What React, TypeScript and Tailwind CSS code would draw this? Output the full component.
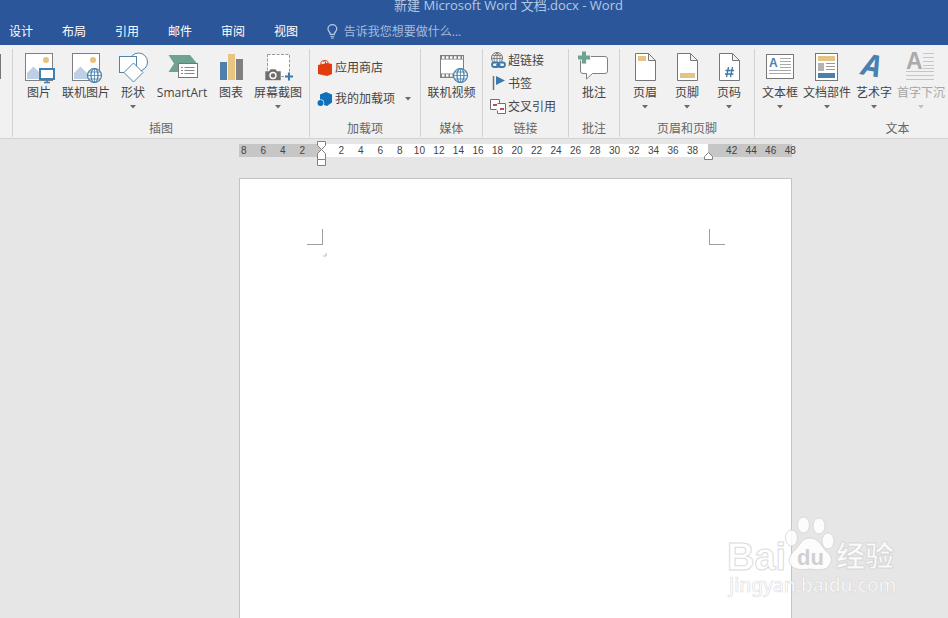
import React from "react";

const tabs = ["设计", "布局", "引用", "邮件", "审阅", "视图"];

// even numbers of the ruler, 0 and 40 sit under the indent markers
const rulerMarks = [
  8, 6, 4, 2, 0, 2, 4, 6, 8, 10, 12, 14, 16, 18, 20, 22, 24, 26, 28, 30, 32,
  34, 36, 38, 40, 42, 44, 46, 48,
];

const Globe = ({ cx, cy, r }: { cx: number; cy: number; r: number }) => (
  <g stroke="#4a80a8" strokeWidth="1.2" fill="none">
    <circle cx={cx} cy={cy} r={r} fill="#f4f8fb" />
    <ellipse cx={cx} cy={cy} rx={r / 2} ry={r} />
    <path
      d={`M${cx - r} ${cy}h${2 * r}M${cx} ${cy - r}v${2 * r}M${cx - r + 1} ${
        cy - 3.5
      }h${2 * r - 2}M${cx - r + 1} ${cy + 3.5}h${2 * r - 2}`}
      strokeWidth=".8"
    />
  </g>
);

const Photo = () => (
  <g>
    <rect x="4.5" y="1.5" width="27" height="27" fill="#fff" stroke="#808080" />
    <circle cx="25" cy="8" r="3" fill="#e8c27a" />
    <path d="M6 27v-6l6.500-6.500L20 22v5z" fill="#bdd0e6" />
  </g>
);

const Sheet = () => (
  <path
    d="M8.500 1.500h13l7 7v20h-20zM21.500 1.500v7h7"
    fill="#fff"
    stroke="#777"
  />
);

const icons: Record<string, React.ReactNode> = {
  picture: (
    <>
      <Photo />
      <rect x="19" y="17" width="14" height="10" fill="#fff" stroke="#3f80b0" strokeWidth="2" />
      <path d="M26 28v2M23 30.500h6" stroke="#3f80b0" strokeWidth="1.500" />
    </>
  ),
  onlinePicture: (
    <>
      <Photo />
      <Globe cx={26.5} cy={23.5} r={7} />
    </>
  ),
  shapes: (
    <g fill="#fff" stroke="#4f86ad">
      <circle cx="23.500" cy="10" r="9" />
      <rect x="4.500" y="4.500" width="17" height="16" />
      <path d="M18.500 11l9.500 9.500-9.500 9.500L9 20.500z" />
    </g>
  ),
  smartart: (
    <>
      <path d="M4.500 3H26l7 8.500L26 20H4.500L10 11.500z" fill="#6fa290" />
      <rect x="14.500" y="11.500" width="19" height="14" fill="#fff" stroke="#777" />
      <path
        d="M17 15.500h2M17 18.500h2M17 21.500h2M20.500 15.500h10M20.500 18.500h10M20.500 21.500h10"
        stroke="#888"
      />
    </>
  ),
  chart: (
    <>
      <rect x="7" y="10" width="7" height="18" fill="#4e7fae" />
      <rect x="15" y="2" width="7" height="26" fill="#e8c681" />
      <rect x="23" y="7" width="7" height="21" fill="#808080" />
    </>
  ),
  screenshot: (
    <>
      <rect x="7.500" y="2.500" width="22" height="22" fill="#fff" stroke="#999" strokeDasharray="3 1.500" />
      <path d="M5 19h4l1.500-2h5l1.500 2h4v9.500H5z" fill="#6e6e6e" stroke="#f1f1f1" strokeWidth=".6" />
      <circle cx="13" cy="23.500" r="3" fill="#6e6e6e" stroke="#fff" strokeWidth="1.400" />
      <path d="M29 20v9M24.500 24.500h9" stroke="#f1f1f1" strokeWidth="5" />
      <path d="M29 20.500v8M25 24.500h8" stroke="#3f78ab" strokeWidth="2" />
    </>
  ),
  video: (
    <>
      <rect x="6.500" y="3.500" width="23" height="22" fill="#fff" stroke="#808080" />
      <path d="M6 5.500h24M6 23.500h24" stroke="#808080" strokeWidth="4" />
      <path d="M8 5.500h21M8 23.500h21" stroke="#fff" strokeWidth="2.400" strokeDasharray="2.500 1.500" />
      <Globe cx={26.5} cy={23.5} r={7} />
    </>
  ),
  comment: (
    <>
      <path
        d="M7 4.500h22a2.500 2.500 0 0 1 2.500 2.500v12a2.500 2.500 0 0 1-2.500 2.500H16.500l-6 5.500v-5.500H7A2.500 2.500 0 0 1 4.500 19V7A2.500 2.500 0 0 1 7 4.500z"
        fill="#fff"
        stroke="#808080"
      />
      <path d="M8 -1v13M1 5.500h14" stroke="#f1f1f1" strokeWidth="6" />
      <path d="M8 -.5v12M2 5.500h12" stroke="#6da491" strokeWidth="4" />
    </>
  ),
  header: (
    <>
      <Sheet />
      <rect x="11" y="4" width="8" height="5" fill="#e5c384" />
    </>
  ),
  footer: (
    <>
      <Sheet />
      <rect x="11" y="21" width="15" height="5" fill="#e5c384" />
    </>
  ),
  pageNumber: (
    <>
      <Sheet />
      <path
        d="M17.500 15l-2 10M21.500 15l-2 10M14.500 18.500h8.500M14 22h8.500"
        stroke="#3f78a4"
        strokeWidth="1.300"
      />
    </>
  ),
  textBox: (
    <>
      <rect x="4.500" y="2.500" width="27" height="24" fill="#fff" stroke="#777" />
      <text x="7" y="15" fontSize="12" fontWeight="700" fill="#4a7fae">
        A
      </text>
      <path
        d="M18 6.500h11M18 9.500h11M18 12.500h11M18 15.500h11M7 18.500h22M7 21.500h22"
        stroke="#aaa"
      />
    </>
  ),
  parts: (
    <>
      <rect x="6.500" y="1.500" width="22" height="27" fill="#fff" stroke="#777" />
      <rect x="9" y="4" width="17" height="5" fill="#e5c384" />
      <rect x="9" y="11" width="6" height="8" fill="#b3b3b3" />
      <path d="M17 11.500h9M17 14.500h9M17 17.500h9" stroke="#999" />
      <rect x="9" y="21" width="17" height="5" fill="#4a7fae" />
    </>
  ),
  wordArt: (
    <text
      x="6"
      y="24"
      fontSize="30"
      fontFamily="Open Sans"
      fontWeight="700"
      fontStyle="italic"
      fill="#4a80b0"
      transform="rotate(10 16 16)"
    >
      A
    </text>
  ),
  dropCap: (
    <>
      <text x="3" y="17" fontSize="23" fontWeight="700" fill="#ababab">
        A
      </text>
      <path
        d="M20 1.500h11M20 5.500h11M20 9.500h11M20 13.500h11M20 16.500h11M3 19.500h28M3 23.500h28M3 27.500h28"
        stroke="#c6c6c6"
      />
    </>
  ),
};

const Arrow = ({ className = "text-[#6a6a6a]" }: { className?: string }) => (
  <svg width="6" height="4" viewBox="0 0 6 4" className={className}>
    <path d="M0 0h6L3 3.500z" fill="currentColor" />
  </svg>
);

type BigProps = {
  icon: string;
  label: string;
  width: string;
  menu?: boolean;
  disabled?: boolean;
};

const BigButton = ({ icon, label, width, menu, disabled }: BigProps) => (
  <button
    disabled={disabled}
    className={`flex shrink-0 flex-col items-center whitespace-nowrap ${width} ${
      disabled ? "text-[#a6a6a6]" : "text-[#444]"
    }`}
  >
    <svg width="36" height="33" viewBox="0 0 36 33" fill="none" className="overflow-visible font-['Liberation_Sans',sans-serif]">
      {icons[icon]}
    </svg>
    <span className="leading-4">{label}</span>
    {menu && (
      <span className="flex pt-1">
        <Arrow className={disabled ? "text-[#c0c0c0]" : "text-[#6a6a6a]"} />
      </span>
    )}
  </button>
);

const SmallButton = ({
  icon,
  label,
  menu,
}: {
  icon: React.ReactNode;
  label: string;
  menu?: boolean;
}) => (
  <button className="flex items-center gap-0.5 whitespace-nowrap leading-4">
    <svg width="16" height="18" viewBox="0 0 16 18" fill="none">
      {icon}
    </svg>
    {label}
    {menu && (
      <span className="pl-2">
        <Arrow />
      </span>
    )}
  </button>
);

const Group = ({
  title,
  width,
  children,
}: {
  title: string;
  width: string;
  children: React.ReactNode;
}) => (
  <section
    className={`flex shrink-0 flex-col justify-between border-r border-[#d2d2d2] ${width}`}
  >
    <div className="flex justify-center pt-[3px]">{children}</div>
    <h2 className="text-center leading-4 text-[#666]">{title}</h2>
  </section>
);

const Ribbon = () => (
  <div className="flex h-[94px] overflow-hidden border-b border-[#d2d2d2] bg-[#f1f1f1] pt-1 pb-px">
    <div className="w-[13px] shrink-0 border-r border-[#d2d2d2] pt-[5px]">
      <div className="h-[25px] w-px bg-[#777]" />
    </div>
    <Group title="插图" width="w-[297px]">
      <div className="flex pl-1.5">
        <BigButton icon="picture" label="图片" width="w-9" />
        <BigButton icon="onlinePicture" label="联机图片" width="w-[58px]" />
        <BigButton icon="shapes" label="形状" width="w-9" menu />
        <BigButton icon="smartart" label="SmartArt" width="w-[62px]" />
        <BigButton icon="chart" label="图表" width="w-9" />
        <BigButton icon="screenshot" label="屏幕截图" width="w-[58px]" menu />
      </div>
    </Group>
    <Group title="加载项" width="w-[111px]">
      <div className="flex w-full flex-col items-start gap-[13px] pt-[7px] pl-[7px] text-[#444]">
        <SmallButton
          label="应用商店"
          icon={
            <>
              <path d="M1 6l9-2 5 1v10l-5 2-9-2z" fill="#e03c0c" />
              <path d="M4 6V3.500c0-2 4-2.500 4.500-.5v2M6.500 3c0-2 4-2 4.500 0v2" stroke="#e03c0c" />
            </>
          }
        />
        <SmallButton
          label="我的加载项"
          menu
          icon={
            <>
              <path d="M9 2l6 2.500v8L10 16l-3-1c1-4-1-6-4-5.500V4.500z" fill="#0f6fb8" />
              <circle cx="3.500" cy="13" r="3" fill="#0f6fb8" />
            </>
          }
        />
      </div>
    </Group>
    <Group title="媒体" width="w-[62px]">
      <BigButton icon="video" label="联机视频" width="w-[58px]" />
    </Group>
    <Group title="链接" width="w-[86px]">
      <div className="flex w-full flex-col items-start gap-[5px] pl-[7px] text-[#444]">
        <SmallButton
          label="超链接"
          icon={
            <>
              <circle cx="7" cy="6" r="5.500" stroke="#707070" />
              <path d="M7 1v10M1.500 6.500h11M2.500 3.500h9M7 1c-4 3-3 7-2 9M7 1c4 3 3 6 2.500 8" stroke="#707070" strokeWidth=".8" />
              <rect x="2" y="10.500" width="7" height="4.500" rx="2.200" fill="#f1f1f1" stroke="#3f78ab" strokeWidth="1.800" />
              <rect x="8" y="10.500" width="7" height="4.500" rx="2.200" stroke="#3f78ab" strokeWidth="1.800" />
              <path d="M6 13h4.500" stroke="#3f78ab" strokeWidth="1.500" />
            </>
          }
        />
        <SmallButton
          label="书签"
          icon={
            <>
              <path d="M3.500 1v14" stroke="#707070" strokeWidth="1.500" />
              <path d="M6 1l9 4.500L6 10z" fill="#3f78ab" />
            </>
          }
        />
        <SmallButton
          label="交叉引用"
          icon={
            <>
              <path d="M6.500 11.500h-6v-10h9v4M7.500 5.500h8v10h-8v-3" fill="#fff" stroke="#707070" />
              <path d="M3 7h4M10 11h4" stroke="#c0504d" strokeWidth="2" />
            </>
          }
        />
      </div>
    </Group>
    <Group title="批注" width="w-[51px]">
      <BigButton icon="comment" label="批注" width="w-9" />
    </Group>
    <Group title="页眉和页脚" width="w-[135px]">
      <BigButton icon="header" label="页眉" width="w-[42px]" menu />
      <BigButton icon="footer" label="页脚" width="w-[42px]" menu />
      <BigButton icon="pageNumber" label="页码" width="w-[42px]" menu />
    </Group>
    <Group title="文本" width="w-[286px]">
      <div className="flex w-full pl-0.5">
        <BigButton icon="textBox" label="文本框" width="w-[46px]" menu />
        <BigButton icon="parts" label="文档部件" width="w-12" menu />
        <BigButton icon="wordArt" label="艺术字" width="w-[46px]" menu />
        <BigButton icon="dropCap" label="首字下沉" width="w-12" menu disabled />
      </div>
    </Group>
  </div>
);

const Ruler = () => (
  <div className="relative flex h-[13px]">
    <div className="w-[83px] bg-[#c6c6c6]" />
    <div className="flex-1 bg-white" />
    <div className="w-[84px] bg-[#c6c6c6]" />
    <div className="absolute inset-y-0 -right-2 -left-[5px] flex font-['Liberation_Sans',sans-serif] text-[10px] leading-[13px] text-[#444]">
      {rulerMarks.map((mark, i) => (
        <span key={i} className="flex w-0 flex-1 justify-center">
          {mark === 0 || mark === 40 ? "" : mark}
        </span>
      ))}
    </div>
    <svg width="10" height="26" viewBox="0 0 10 26" className="absolute -top-[3px] left-[78px]">
      <g fill="#fff" stroke="#808080">
        <path d="M.5.5h8v4l-4 4-4-4z" />
        <path d="M4.500 8.500l4 4v6h-8v-6z" />
        <path d="M.5 18.500h8v6h-8z" />
      </g>
    </svg>
    <svg width="10" height="9" viewBox="0 0 10 9" className="absolute top-2 right-[78px]">
      <path d="M4.500.5l4 4v3h-8v-3z" fill="#fff" stroke="#808080" />
    </svg>
  </div>
);

const Watermark = () => (
  <svg
    width="180"
    height="90"
    viewBox="0 0 180 90"
    className="absolute right-11 bottom-3 font-['Liberation_Sans','Noto_Sans_CJK_SC',sans-serif]"
  >
    <g fill="#fff" fillOpacity=".85" stroke="#d2d2d2" strokeOpacity=".8">
      <text x="3" y="54" fontSize="38" fontWeight="700">
        Bai
      </text>
      <ellipse cx="67.500" cy="22" rx="6" ry="8" />
      <ellipse cx="79.500" cy="9" rx="6" ry="8" />
      <ellipse cx="95" cy="10" rx="6" ry="8" />
      <ellipse cx="104" cy="25" rx="6" ry="8" />
      <path d="M86 22c8 0 11 7 15 12 6 5 8 9 5 14-3 7-11 6-20 5-9 1-17 1-20-5-2-5 0-9 5-14 5-5 7-12 15-12z" />
      <text x="112" y="51" fontSize="29" fontWeight="700">
        经验
      </text>
      <text x="5" y="76" fontSize="19" fontFamily="Noto Sans" fontWeight="500" strokeWidth=".6">
        jingyan.baidu.com
      </text>
    </g>
    <text x="73" y="49" fontSize="22" fontWeight="700" fill="#d0d0d0">
      du
    </text>
  </svg>
);

const App = () => {
  return (
    <div className="relative flex min-h-screen flex-col overflow-hidden bg-[#e6e6e6] font-['Open_Sans','Noto_Sans_CJK_SC',sans-serif] text-xs">
      <header className="bg-[#2b579a]">
        <h1 className="h-[18px] pl-[69px] text-center text-[13px] leading-[10px] text-[#b4c8e6]">
          新建 Microsoft Word 文档.docx - Word
        </h1>
        <div className="flex h-[27px] items-center pl-[9px]">
          <nav className="flex gap-[29px]">
            {tabs.map((tab) => (
              <button key={tab} className="text-white">
                {tab}
              </button>
            ))}
          </nav>
          <label className="flex flex-1 items-center gap-1.5 pl-[29px]">
            <svg width="11" height="15" viewBox="0 0 11 15" fill="none" stroke="#b4c8e6">
              <path d="M3.500 10.500C3.500 8 1 7.500 1 4.800a4.500 4.300 0 0 1 9 0c0 2.700-2.500 3.200-2.500 5.700z" strokeWidth="1.300" />
              <path d="M3.500 12.500h4M4 14.300h3" />
            </svg>
            <input
              aria-label="告诉我您想要做什么..."
              placeholder="告诉我您想要做什么..."
              className="w-full bg-transparent outline-none placeholder:text-[#a5bbdd]"
            />
          </label>
        </div>
      </header>

      <Ribbon />

      <main className="flex flex-1 flex-col pt-[5px] pr-[156px] pl-[239px]">
        <Ruler />
        <article className="mt-[21px] flex-1 border border-b-0 border-[#c3c3c3] bg-white pt-[50px]">
          <div className="flex justify-between pr-[66px] pl-[67px]">
            <div className="size-4 border-r border-b border-[#a0a0a0]" />
            <div className="size-4 border-b border-l border-[#a0a0a0]" />
          </div>
          <svg width="4" height="4" viewBox="0 0 4 4" className="mt-2 ml-[83px]">
            <path d="M3 0v3H0" stroke="#bbb" fill="none" />
          </svg>
        </article>
      </main>

      <Watermark />
    </div>
  );
};

export default App;
